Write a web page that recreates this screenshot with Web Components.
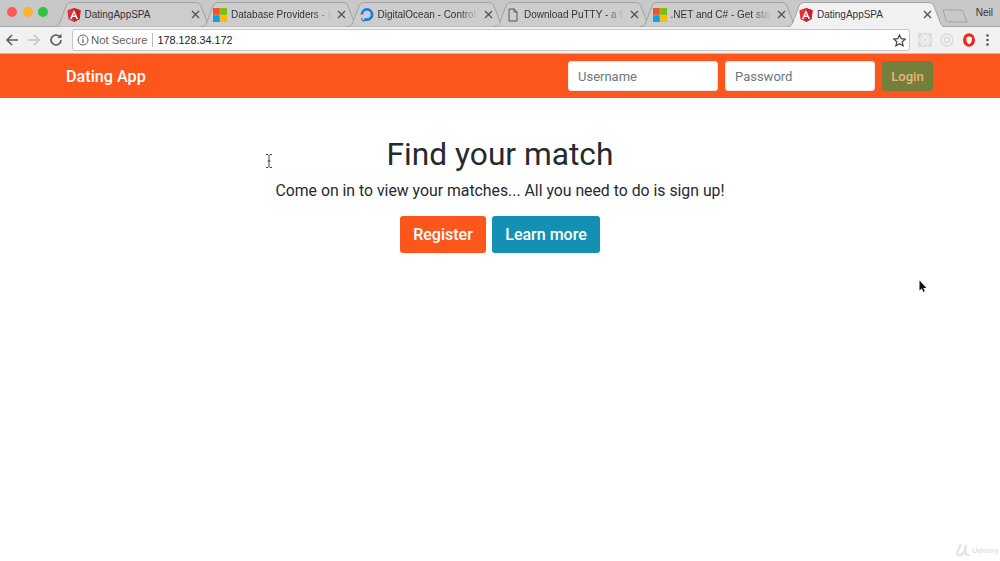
<!DOCTYPE html>
<html>
<head>
<meta charset="utf-8">
<title>DatingAppSPA</title>
<style>
  html, body { margin: 0; height: 100%; background: #fff; overflow: hidden; }
  body { position: relative; }
</style>
</head>
<body>
<browser-chrome>
  <browser-tab icon="angular">DatingAppSPA</browser-tab>
  <browser-tab icon="windows" fade>Database Providers - EF Core</browser-tab>
  <browser-tab icon="ocean" fade>DigitalOcean - Control Panel</browser-tab>
  <browser-tab icon="page" fade>Download PuTTY - a free SSH</browser-tab>
  <browser-tab icon="windows" fade>.NET and C# - Get started</browser-tab>
  <browser-tab icon="angular" active>DatingAppSPA</browser-tab>
</browser-chrome>
<app-nav brand="Dating App"></app-nav>
<app-hero></app-hero>
<screen-marks></screen-marks>

<script>
const ICONS = {
  angular: `<svg width="14" height="14" viewBox="0 0 14 14"><path d="M7 0 .4 2.300l1 8.700L7 14l5.600-3 1-8.700z" fill="#e0313a"/><path d="M7 0v14l5.600-3 1-8.700z" fill="#c4232d"/><path d="M7 1.900 2.900 11h1.700l.8-2.100h3.200l.8 2.100h1.700zM6 7.500 7 5l1 2.500z" fill="#fff"/></svg>`,
  windows: `<svg width="14" height="14" viewBox="0 0 14 14"><rect width="6.800" height="6.800" fill="#f35325"/><rect x="7.200" width="6.800" height="6.800" fill="#81bc06"/><rect y="7.200" width="6.800" height="6.800" fill="#05a6f0"/><rect x="7.200" y="7.200" width="6.800" height="6.800" fill="#ffba08"/></svg>`,
  ocean: `<svg width="14" height="14" viewBox="0 0 14 14" fill="#1f7ce0"><path d="M7 13v-2.800A3.700 3.700 0 1 0 3.300 6.500H.5A6.500 6.500 0 1 1 7 13z"/><path d="M4.300 10.200H7V13H4.300zM2.400 11.700h1.900v1.900H2.400zM1 10.200h1.400v1.500H1z"/></svg>`,
  page: `<svg width="14" height="14" viewBox="0 0 14 14" fill="none" stroke="#555" stroke-width="1"><path d="M3 1h5.200L11 3.800V13H3zM8 1v3h3"/></svg>`
};

class BrowserTab extends HTMLElement {
  connectedCallback() {
    const active = this.hasAttribute('active');
    const fill = active ? '#f1f1f1' : '#cdcdcd';
    const root = this.attachShadow({mode: 'open'});
    root.innerHTML = `
      <style>
        :host {
          display: flex; align-items: center; box-sizing: border-box; position: relative;
          width: 159px; height: 25px; margin-right: -12.5px; padding: 0 13.5px 0 12.5px;
          font: 10px/1 "Liberation Sans", Arial, sans-serif; color: #333;
          z-index: ${active ? 2 : 1};
        }
        svg.shape { position: absolute; left: 0; top: 0; }
        .icon { position: relative; width: 14px; height: 14px; flex: none; margin-right: 4px; }
        .icon svg { display: block; }
        .label {
          position: relative; flex: 1; overflow: hidden; white-space: nowrap; line-height: 14px;
          ${this.hasAttribute('fade') ? '-webkit-mask-image: linear-gradient(90deg,#000 82%,transparent 100%);' : ''}
        }
        .close { position: relative; flex: none; width: 9px; height: 9px; margin-left: 6px; }
      </style>
      <svg class="shape" width="159" height="25" viewBox="0 0 159 25">
        ${active ? '' : '<path d="M0 24.500H159" stroke="#a8a8a8"/>'}
        <path d="M0 24.500C4 24.500 5 23 6 20L12 4Q13 .5 17 .5H142Q146 .5 147 4L153 20C154 23 155 24.500 159 24.500" fill="${fill}" stroke="#a3a3a3"/>
        ${active ? `<rect x="4" y="24" width="151" height="1" fill="${fill}"/>` : ''}
      </svg>
      <span class="icon">${ICONS[this.getAttribute('icon')]}</span>
      <span class="label"><slot></slot></span>
      <svg class="close" viewBox="0 0 9 9" stroke="#555" stroke-width="1.400"><path d="M1 1l7 7M8 1 1 8"/></svg>`;
  }
}
customElements.define('browser-tab', BrowserTab);

const chromeTemplate = document.createElement('template');
chromeTemplate.innerHTML = `
  <style>
    :host { display: block; height: 54px; background: #c8c8c8; font-family: "Liberation Sans", Arial, sans-serif; }
    .strip { display: flex; height: 27px; box-sizing: border-box; padding-top: 2px; box-shadow: inset 0 -1px #a8a8a8; }
    .lights { display: flex; gap: 5.500px; width: 54px; flex: none; box-sizing: border-box; padding: 5px 0 0 7px; }
    .lights i { width: 10px; height: 10px; border-radius: 50%; }
    .tabs { display: flex; position: relative; flex: none; }
    .spare { margin: 7px 0 0 9px; flex: none; }
    .user { margin-left: auto; padding: 5px 7px 0 0; font-size: 10px; color: #333; }
    .bar { display: flex; align-items: center; height: 27px; box-sizing: border-box; background: #f1f1f1; border-bottom: 1px solid #bdbdbd; }
    .nav { display: flex; align-items: center; flex: none; width: 72px; box-sizing: border-box; padding-left: 5px; gap: 8px; }
    .omni {
      display: flex; align-items: center; width: 838px; height: 22px; flex: none; box-sizing: border-box;
      background: #fff; border: 1px solid #c6c6c6; border-radius: 3px; padding: 0 3px 0 4px; font-size: 11px;
    }
    .secure { color: #5f5f5f; margin-left: 2px; padding-right: 4px; border-right: 1px solid #bbb; line-height: 14px; font-size: 11.300px; }
    .host { color: #222; margin-left: 5px; font-size: 10.800px; }
    .star { margin-left: auto; }
    .ext { display: flex; align-items: center; gap: 8px; margin-left: 8px; }
    .ext svg { display: block; }
  </style>
  <div class="strip">
    <div class="lights"><i style="background:#fc5b57"></i><i style="background:#fbb331"></i><i style="background:#2ec441"></i></div>
    <div class="tabs"><slot></slot></div>
    <svg class="spare" width="26" height="14" viewBox="0 0 26 14" fill="#c8c8c8" stroke="#a3a3a3"><path d="M1 1H19Q20.500 1 21 2.500L25 13H6Q4.500 13 4 11.500z"/></svg>
    <span class="user">Neil</span>
  </div>
  <div class="bar">
    <div class="nav">
      <svg width="14" height="14" viewBox="0 0 14 14" fill="none" stroke="#5c5c5c" stroke-width="1.600"><path d="M13 7H2M7 2 2 7l5 5"/></svg>
      <svg width="14" height="14" viewBox="0 0 14 14" fill="none" stroke="#c4c4c4" stroke-width="1.600"><path d="M1 7h11M7 2l5 5-5 5"/></svg>
      <svg width="14" height="14" viewBox="0 0 14 14" fill="none" stroke="#5c5c5c" stroke-width="1.600"><path d="M12 7a5 5 0 1 1-1.500-3.600"/><path d="M12.500 .8v4.200H8.300z" fill="#5c5c5c" stroke="none"/></svg>
    </div>
    <div class="omni">
      <svg width="12" height="12" viewBox="0 0 12 12" fill="none" stroke="#5f5f5f"><circle cx="6" cy="6" r="5"/><path d="M6 5.200V9M6 3v1.200" stroke-width="1.200"/></svg>
      <span class="secure">Not Secure</span>
      <span class="host">178.128.34.172</span>
      <svg class="star" width="13" height="13" viewBox="0 0 13 13" fill="none" stroke="#444" stroke-width="1.200"><path d="M6.500 1 8.200 4.700l4 .4-3 2.700.9 4-3.600-2.100-3.600 2.100.9-4-3-2.700 4-.4z"/></svg>
    </div>
    <div class="ext">
      <svg width="14" height="14" viewBox="0 0 14 14"><rect width="14" height="14" fill="#dcdcdc"/><g fill="none" stroke="#f4f4f4"><ellipse cx="7" cy="7" rx="5.500" ry="2.200"/><ellipse cx="7" cy="7" rx="5.500" ry="2.200" transform="rotate(60 7 7)"/><ellipse cx="7" cy="7" rx="5.500" ry="2.200" transform="rotate(120 7 7)"/></g></svg>
      <svg width="14" height="14" viewBox="0 0 14 14" fill="none" stroke="#dcdcdc" stroke-width="1.500"><circle cx="7" cy="7" r="6"/><circle cx="7" cy="7" r="2.500"/></svg>
      <svg width="14" height="14" viewBox="0 0 14 14"><ellipse cx="7" cy="7" rx="6" ry="6.800" fill="#e8281e"/><path d="M4.500 4.500Q7 2.500 9.800 4.200V8Q9 10.500 7 11.500 5 10.500 4.500 8z" fill="#fff"/></svg>
      <svg width="3" height="12" viewBox="0 0 3 12" fill="#555" style="margin-left:2px"><circle cx="1.500" cy="1.500" r="1.300"/><circle cx="1.500" cy="6" r="1.300"/><circle cx="1.500" cy="10.500" r="1.300"/></svg>
    </div>
  </div>`;
customElements.define('browser-chrome', class extends HTMLElement {
  constructor() {
    super();
    this.root = this.attachShadow({mode: 'open'});
    this.root.appendChild(chromeTemplate.content.cloneNode(true));
  }
});

const navTemplate = document.createElement('template');
navTemplate.innerHTML = `
  <style>
    :host {
      display: flex; align-items: center; justify-content: space-between; height: 44px; box-sizing: border-box;
      padding: 0 67px 0 66px; background: #fc561c; font-family: Roboto, "Noto Sans", sans-serif;
    }
    .brand { font-size: 16.200px; font-weight: 500; color: #fff; }
    form { display: flex; gap: 7px; margin: 0; }
    input {
      width: 150px; height: 30px; box-sizing: border-box; border: 1px solid #e8e8e8; border-radius: 3px; padding: 0 9px;
      font: 13px Roboto, "Noto Sans", sans-serif; background: #fff; outline: none;
    }
    input::placeholder { color: #6f7780; opacity: 1; }
    button {
      width: 51px; height: 30px; border: 0; border-radius: 3px; padding: 0; background: #737f3a; color: #e8b67c;
      font: 500 13px Roboto, "Noto Sans", sans-serif;
    }
  </style>
  <span class="brand"></span>
  <form>
    <input placeholder="Username"><input placeholder="Password">
    <button type="button">Login</button>
  </form>`;
customElements.define('app-nav', class extends HTMLElement {
  constructor() {
    super();
    this.root = this.attachShadow({mode: 'open'});
    this.root.appendChild(navTemplate.content.cloneNode(true));
    this.root.querySelector('.brand').textContent = this.getAttribute('brand');
  }
});

const heroTemplate = document.createElement('template');
heroTemplate.innerHTML = `
  <style>
    :host { display: block; padding-top: 37px; text-align: center; color: #262a2e; font-family: Roboto, "Noto Sans", sans-serif; }
    h1 { margin: 0; font-size: 31.700px; font-weight: 400; line-height: 40px; }
    p { margin: 4px 0 0; font-size: 15.800px; line-height: 24px; }
    .actions { display: flex; justify-content: center; gap: 6px; margin-top: 13px; }
    button {
      height: 37px; border: 0; border-radius: 3px; padding: 0; color: #fff;
      font: 500 16px Roboto, "Noto Sans", sans-serif;
    }
    .primary { width: 86px; background: #fc561c; }
    .info { width: 108px; background: #1490b2; }
  </style>
  <h1>Find your match</h1>
  <p>Come on in to view your matches... All you need to do is sign up!</p>
  <div class="actions">
    <button class="primary" type="button">Register</button>
    <button class="info" type="button">Learn more</button>
  </div>`;
customElements.define('app-hero', class extends HTMLElement {
  constructor() {
    super();
    this.root = this.attachShadow({mode: 'open'});
    this.root.appendChild(heroTemplate.content.cloneNode(true));
  }
});

// pointer captures and the video watermark sit over the page
const marksTemplate = document.createElement('template');
marksTemplate.innerHTML = `
  <style>
    :host { display: block; }
    svg, span { position: absolute; }
    .ibeam { left: 265px; top: 154px; }
    .arrow { left: 919px; top: 280px; }
    .logo { left: 955px; top: 543px; }
    span { left: 972px; top: 546px; font: 700 8px "Liberation Sans", sans-serif; color: #e2e2e2; }
  </style>
  <svg class="ibeam" width="8" height="14" viewBox="0 0 8 14" fill="none" stroke="#444"><path d="M1 .5h2l1 1 1-1h2M4 1.500v11M1 13.500h2l1-1 1 1h2M2.500 7h3"/></svg>
  <svg class="arrow" width="8" height="13" viewBox="0 0 8 13"><path d="M.5.500v10l2.300-2 1.500 3.500 1.500-.7-1.500-3.300H7.500z" fill="#111"/></svg>
  <svg class="logo" width="16" height="14" viewBox="0 0 16 14" fill="none" stroke="#e2e2e2" stroke-width="2.200"><path d="M6 1 2.500 8.500q-1 4 2 4 3 0 5-5L11 2q-1.500 6 0 9 1 1.500 3.500 1"/></svg>
  <span>Udemy</span>`;
customElements.define('screen-marks', class extends HTMLElement {
  constructor() {
    super();
    this.root = this.attachShadow({mode: 'open'});
    this.root.appendChild(marksTemplate.content.cloneNode(true));
  }
});
</script>
</body>
</html>
